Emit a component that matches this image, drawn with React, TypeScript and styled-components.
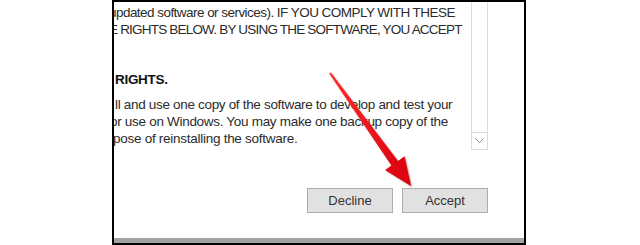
import styled, { createGlobalStyle } from "styled-components";

const GlobalStyle = createGlobalStyle`
  html, body {
    margin: 0;
    padding: 0;
    background: #ffffff;
  }
  body {
    font-family: "Liberation Sans", Arial, sans-serif;
  }
`;

type Line = { text: string; shift: number; tracking: number };

const intro: Line[] = [
  { text: "updated software or services). IF YOU COMPLY WITH THESE", shift: -5, tracking: -0.54 },
  { text: "E RIGHTS BELOW. BY USING THE SOFTWARE, YOU ACCEPT", shift: -5, tracking: -0.8 },
];

const grant: Line[] = [
  { text: "ll and use one copy of the software to develop and test your", shift: 1, tracking: -0.32 },
  { text: "or use on Windows. You may make one backup copy of the", shift: -4, tracking: -0.3 },
  { text: "pose of reinstalling the software.", shift: -1, tracking: -0.27 },
];

const App = () => {
  return (
    <>
      <GlobalStyle />
      <Stage>
        <Window>
          <Body>
            <Document>
              <Paragraph $gap={2}>
                {intro.map((line, i) => (
                  <TextLine key={i} $shift={line.shift} $tracking={line.tracking}>
                    {line.text}
                  </TextLine>
                ))}
              </Paragraph>
              <Heading>RIGHTS.</Heading>
              <Paragraph $gap={8}>
                {grant.map((line, i) => (
                  <TextLine key={i} $shift={line.shift} $tracking={line.tracking}>
                    {line.text}
                  </TextLine>
                ))}
              </Paragraph>
            </Document>
            <ScrollBar>
              <Track />
              <ArrowButton>
                <svg width="9" height="6" viewBox="0 0 9 6">
                  <path d="M0.5 0.5 L4.5 4.5 L8.5 0.5" fill="none" stroke="#8a8a8a" strokeWidth="1" />
                </svg>
              </ArrowButton>
            </ScrollBar>
          </Body>
          <Buttons>
            <Button>Decline</Button>
            <Button>Accept</Button>
          </Buttons>
          <BottomBar />
        </Window>
        <Pointer width="100" height="125" viewBox="320 65 100 125">
          <defs>
            <linearGradient id="red" x1="0" y1="0" x2="1" y2="0">
              <stop offset="0" stopColor="#ff2b2b" />
              <stop offset="1" stopColor="#d8000c" />
            </linearGradient>
          </defs>
          <polygon
            points="331.8,73.4 399,161.9 405.5,157.2 412,187 386,171 392.4,166.5 330.2,74.6"
            fill="#7a0000"
            opacity="0.25"
          />
          <polygon
            points="330.8,72.4 398,160.9 404.5,156.2 411,186 385,170 391.4,165.5 329.2,73.6"
            fill="url(#red)"
          />
        </Pointer>
      </Stage>
    </>
  );
};

export default App;

const Stage = styled.div`
  position: relative;
  width: 640px;
  height: 245px;
  padding-left: 112px;
  box-sizing: border-box;
  overflow: hidden;
`;

const Window = styled.div`
  width: 414px;
  height: 245px;
  box-sizing: border-box;
  border: 2px solid #000000;
  border-bottom: none;
  background: #ffffff;
  display: flex;
  flex-direction: column;
`;

const Body = styled.div`
  display: flex;
  height: 148px;
  padding-right: 36px;
`;

const Document = styled.div`
  flex: 1;
  overflow: hidden;
  color: #2b2b2b;
  font-size: 13.5px;
  line-height: 17px;
`;

const Paragraph = styled.div<{ $gap: number }>`
  margin-top: ${(p) => p.$gap}px;
`;

const TextLine = styled.div<{ $shift: number; $tracking: number }>`
  margin-left: ${(p) => p.$shift}px;
  letter-spacing: ${(p) => p.$tracking}px;
  white-space: nowrap;
`;

const Heading = styled.div`
  margin: 33px 0 0 1px;
  font-weight: 700;
  color: #111111;
  letter-spacing: -0.3px;
  white-space: nowrap;
`;

const ScrollBar = styled.div`
  width: 17px;
  display: flex;
  flex-direction: column;
  border-left: 1px solid #dcdcdc;
  border-right: 1px solid #dcdcdc;
  box-sizing: border-box;
`;

const Track = styled.div`
  flex: 1;
`;

const ArrowButton = styled.div`
  height: 16px;
  border-top: 1px solid #dcdcdc;
  border-bottom: 1px solid #dcdcdc;
  display: flex;
  align-items: center;
  justify-content: center;
`;

const Buttons = styled.div`
  display: flex;
  justify-content: flex-end;
  gap: 9px;
  padding: 38px 36px 0 0;
  flex: 1;
`;

const Button = styled.div`
  width: 86px;
  height: 25px;
  box-sizing: border-box;
  border: 1px solid #adadad;
  background: #e1e1e1;
  color: #333333;
  font-size: 13px;
  display: flex;
  align-items: center;
  justify-content: center;
`;

const BottomBar = styled.div`
  height: 5px;
  background: #a3a3a3;
  border-bottom: 2px solid #000000;
`;

const Pointer = styled.svg`
  position: absolute;
  left: 320px;
  top: 65px;
  filter: drop-shadow(1px 1px 1px rgba(120, 0, 0, 0.25));
`;
